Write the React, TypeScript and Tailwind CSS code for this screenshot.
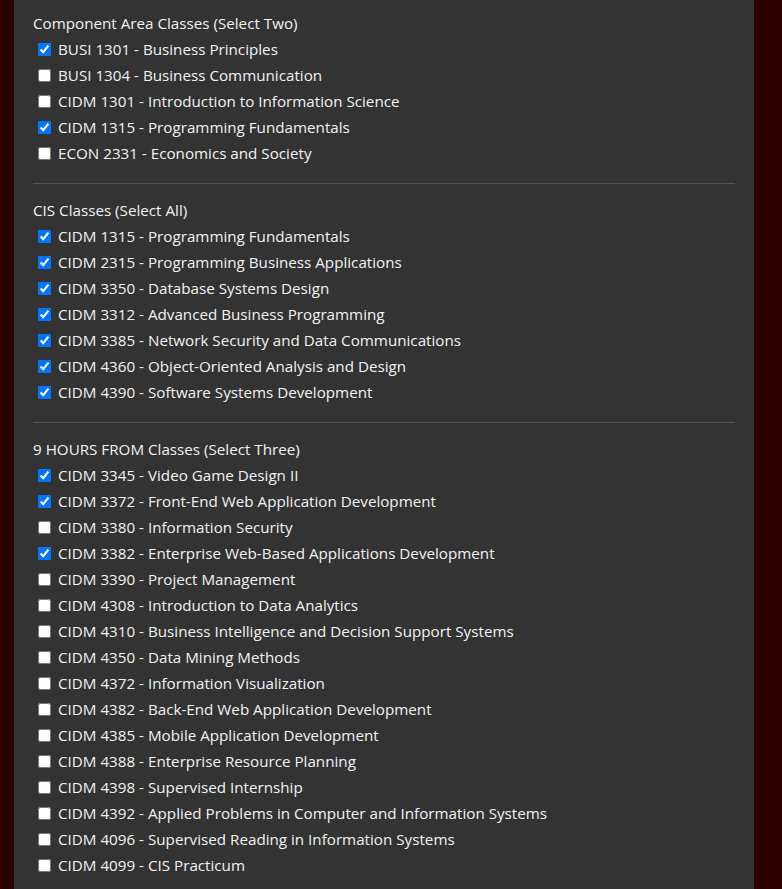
import { useState } from 'react'

type Course = { code: string; name: string; checked: boolean }

const sections: { title: string; courses: Course[] }[] = [
  {
    title: 'Component Area Classes (Select Two)',
    courses: [
      { code: 'BUSI 1301', name: 'Business Principles', checked: true },
      { code: 'BUSI 1304', name: 'Business Communication', checked: false },
      { code: 'CIDM 1301', name: 'Introduction to Information Science', checked: false },
      { code: 'CIDM 1315', name: 'Programming Fundamentals', checked: true },
      { code: 'ECON 2331', name: 'Economics and Society', checked: false },
    ],
  },
  {
    title: 'CIS Classes (Select All)',
    courses: [
      { code: 'CIDM 1315', name: 'Programming Fundamentals', checked: true },
      { code: 'CIDM 2315', name: 'Programming Business Applications', checked: true },
      { code: 'CIDM 3350', name: 'Database Systems Design', checked: true },
      { code: 'CIDM 3312', name: 'Advanced Business Programming', checked: true },
      { code: 'CIDM 3385', name: 'Network Security and Data Communications', checked: true },
      { code: 'CIDM 4360', name: 'Object-Oriented Analysis and Design', checked: true },
      { code: 'CIDM 4390', name: 'Software Systems Development', checked: true },
    ],
  },
  {
    title: '9 HOURS FROM Classes (Select Three)',
    courses: [
      { code: 'CIDM 3345', name: 'Video Game Design II', checked: true },
      { code: 'CIDM 3372', name: 'Front-End Web Application Development', checked: true },
      { code: 'CIDM 3380', name: 'Information Security', checked: false },
      { code: 'CIDM 3382', name: 'Enterprise Web-Based Applications Development', checked: true },
      { code: 'CIDM 3390', name: 'Project Management', checked: false },
      { code: 'CIDM 4308', name: 'Introduction to Data Analytics', checked: false },
      { code: 'CIDM 4310', name: 'Business Intelligence and Decision Support Systems', checked: false },
      { code: 'CIDM 4350', name: 'Data Mining Methods', checked: false },
      { code: 'CIDM 4372', name: 'Information Visualization', checked: false },
      { code: 'CIDM 4382', name: 'Back-End Web Application Development', checked: false },
      { code: 'CIDM 4385', name: 'Mobile Application Development', checked: false },
      { code: 'CIDM 4388', name: 'Enterprise Resource Planning', checked: false },
      { code: 'CIDM 4398', name: 'Supervised Internship', checked: false },
      { code: 'CIDM 4392', name: 'Applied Problems in Computer and Information Systems', checked: false },
      { code: 'CIDM 4096', name: 'Supervised Reading in Information Systems', checked: false },
      { code: 'CIDM 4099', name: 'CIS Practicum', checked: false },
    ],
  },
]

function CourseRow({ course, id }: { course: Course; id: string }) {
  const [checked, setChecked] = useState(course.checked)
  return (
    <div className="flex h-[26px] items-center">
      <input
        id={id}
        type="checkbox"
        checked={checked}
        onChange={() => setChecked(!checked)}
        className="ml-[5px] mr-[7px] h-[13px] w-[13px] accent-[#0075ff]"
      />
      <label htmlFor={id}>
        {course.code} - {course.name}
      </label>
    </div>
  )
}

export default function App() {
  return (
    <div className="min-h-screen bg-[#2b0000] px-[14px] text-[#f2f2f2] [font-family:'Open_Sans',sans-serif] text-[15.2px]">
      <div className="w-[740px] bg-[#333333] px-[19px] pt-[10px] pb-6">
        {sections.map((section, si) => (
          <div key={section.title}>
            {si > 0 && <hr className="mt-[17px] mb-[13px] border-t border-[#555555]" />}
            <div className="flex h-[26px] items-center">{section.title}</div>
            {section.courses.map((c, ci) => (
              <CourseRow key={c.code + ci} course={c} id={`c-${si}-${ci}`} />
            ))}
          </div>
        ))}
      </div>
    </div>
  )
}
